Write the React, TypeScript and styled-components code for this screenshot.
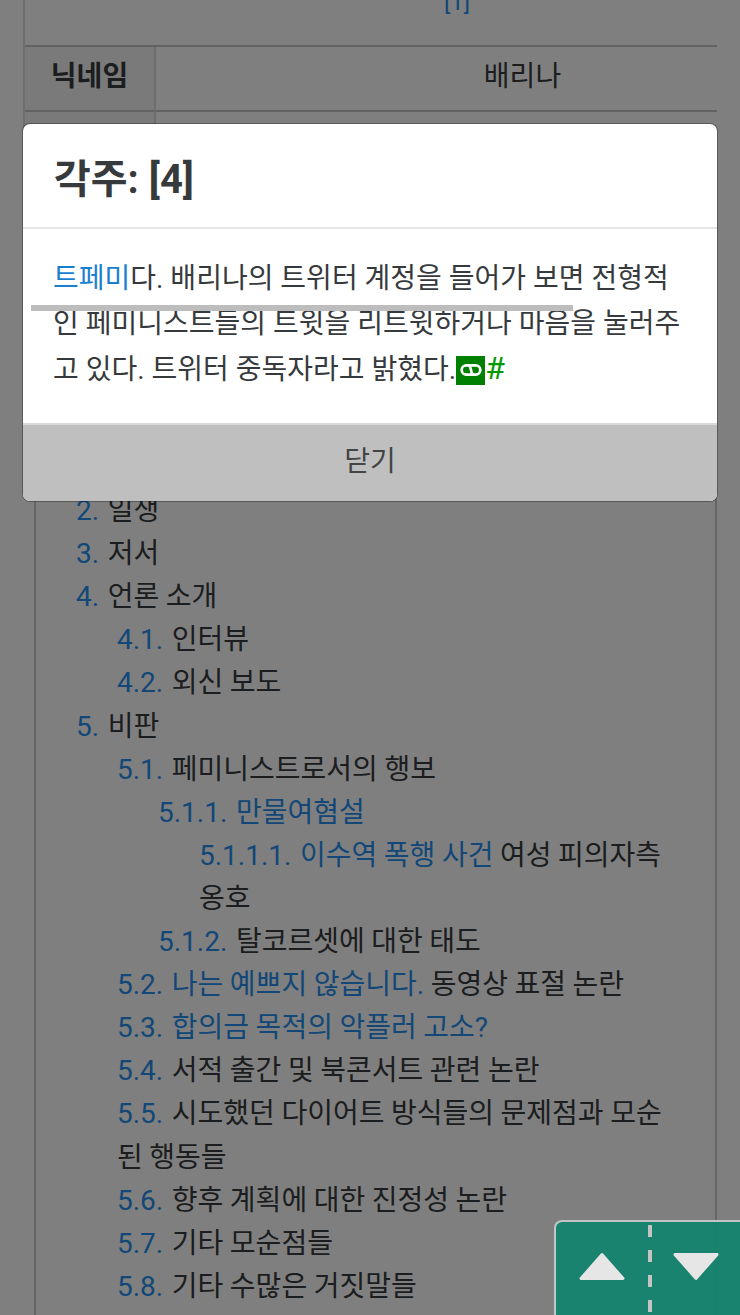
import styled, { createGlobalStyle } from 'styled-components';

interface TocEntry {
    level: number;
    num: string;
    linkText?: string;
    text?: string;
}

const tocEntries: TocEntry[] = [
    { level: 0, num: '1.', text: '개요' },
    { level: 0, num: '2.', text: '일생' },
    { level: 0, num: '3.', text: '저서' },
    { level: 0, num: '4.', text: '언론 소개' },
    { level: 1, num: '4.1.', text: '인터뷰' },
    { level: 1, num: '4.2.', text: '외신 보도' },
    { level: 0, num: '5.', text: '비판' },
    { level: 1, num: '5.1.', text: '페미니스트로서의 행보' },
    { level: 2, num: '5.1.1.', linkText: '만물여혐설' },
    { level: 3, num: '5.1.1.1.', linkText: '이수역 폭행 사건', text: ' 여성 피의자측 옹호' },
    { level: 2, num: '5.1.2.', text: '탈코르셋에 대한 태도' },
    { level: 1, num: '5.2.', linkText: '나는 예쁘지 않습니다.', text: ' 동영상 표절 논란' },
    { level: 1, num: '5.3.', linkText: '합의금 목적의 악플러 고소?' },
    { level: 1, num: '5.4.', text: '서적 출간 및 북콘서트 관련 논란' },
    { level: 1, num: '5.5.', text: '시도했던 다이어트 방식들의 문제점과 모순된 행동들' },
    { level: 1, num: '5.6.', text: '향후 계획에 대한 진정성 논란' },
    { level: 1, num: '5.7.', text: '기타 모순점들' },
    { level: 1, num: '5.8.', text: '기타 수많은 거짓말들' },
];

const GlobalStyle = createGlobalStyle`
    html, body {
        margin: 0;
        padding: 0;
        background: #ffffff;
    }

    * {
        box-sizing: border-box;
    }
`;

const Page = styled.div`
    position: relative;
    width: 740px;
    height: 1315px;
    overflow: hidden;
    background: #ffffff;
    color: #373a3c;
    font-family: Roboto, 'Noto Sans CJK KR', sans-serif;
    font-size: 28px;
`;

const Article = styled.div`
    display: flex;
    flex-direction: column;
    padding: 0 23px;
`;

const TableWrap = styled.div`
    width: 694px;
    height: 300px;
    overflow: hidden;
    border-left: 2px solid #dddddd;
`;

const Table = styled.div`
    display: grid;
    grid-template-columns: 131px 733px;
    width: 864px;
`;

const SourceCell = styled.div`
    grid-column: 1 / 3;
    height: 47px;
    border-bottom: 2px solid #c4c4c4;
    text-align: center;
    line-height: 4px;
    font-size: 24px;
`;

const HeadCell = styled.div<{ $height: number }>`
    display: flex;
    align-items: center;
    justify-content: center;
    height: ${props => props.$height}px;
    padding-bottom: 10px;
    background: #f5f5f5;
    border-right: 2px solid #dddddd;
    border-bottom: 2px solid #c4c4c4;
    font-weight: 700;
`;

const ValueCell = styled.div<{ $height: number }>`
    display: flex;
    align-items: center;
    justify-content: center;
    height: ${props => props.$height}px;
    padding-bottom: 10px;
    border-bottom: 2px solid #c4c4c4;
`;

const Toc = styled.div`
    margin: 120px 0 0 11px;
    width: 683px;
    height: 1000px;
    padding: 24px 36px 0 40px;
    border: 2px solid #cccccc;
`;

const TocItem = styled.div<{ $level: number }>`
    padding-left: ${props => props.$level * 41}px;
    line-height: 43.1px;
    word-break: break-all;
    word-spacing: -0.4px;
`;

const TocLink = styled.span`
    color: #268fee;
`;

const TocNumber = styled(TocLink)`
    margin-right: 2px;
`;

const Scrim = styled.div`
    position: absolute;
    inset: 0;
    background: rgba(0, 0, 0, 0.5);
`;

const Modal = styled.div`
    position: absolute;
    top: 124px;
    left: 23px;
    display: flex;
    flex-direction: column;
    width: 694px;
    height: 377px;
    overflow: hidden;
    background: #ffffff;
    border-radius: 7px;
    box-shadow: 0 0 0 1px rgba(0, 0, 0, 0.3);
`;

const ModalHeader = styled.div`
    display: flex;
    align-items: center;
    height: 105px;
    padding: 0 31px;
    border-bottom: 2px solid #e5e5e5;
`;

const ModalTitle = styled.h4`
    margin: 0;
    font-size: 40px;
    font-weight: 700;
    color: #373a3c;
`;

const ModalBody = styled.div`
    flex: 1;
    padding: 28px 30px 0;
    line-height: 44.5px;
    word-break: break-all;
`;

const BodyLink = styled.span`
    color: #1b7fd0;
`;

const SourceBadge = styled.span`
    display: inline-flex;
    align-items: center;
    justify-content: center;
    width: 29px;
    height: 29px;
    vertical-align: 2px;
    background: #008000;
`;

const SourceMark = styled.span`
    font-size: 32px;
    color: #009a00;
`;

const ModalFooter = styled.div`
    display: flex;
    align-items: center;
    justify-content: center;
    height: 78px;
    padding-bottom: 9px;
    background: #bfbfbf;
    border-top: 2px solid #d9d9d9;
    font-size: 28px;
    color: #444444;
`;

const ScrollBar = styled.div`
    position: absolute;
    top: 305px;
    left: 31px;
    width: 542px;
    height: 6px;
    background: #bdbdbd;
`;

const JumpNav = styled.div`
    position: absolute;
    right: 0;
    bottom: 0;
    display: flex;
    width: 186px;
    height: 95px;
    background: rgba(22, 131, 110, 0.97);
    border-top: 2px solid #c4c4c4;
    border-left: 2px solid #c4c4c4;
    border-top-left-radius: 8px;
`;

const JumpButton = styled.div<{ $width: number }>`
    display: flex;
    flex: 0 0 ${props => props.$width}px;
    justify-content: center;
    padding-top: 30px;
`;

const JumpDivider = styled.div`
    width: 4px;
    background-image: linear-gradient(#c4c4c4 50%, transparent 50%);
    background-size: 4px 25px;
    background-position: 0 3px;
`;

const LinkIcon = () => (
    <svg width="22" height="14" viewBox="0 0 26 16" fill="none" stroke="#ffffff" strokeWidth="3.2">
        <rect x="2" y="2.5" width="22" height="11" rx="5.5" />
        <path d="M10 2.5C14 2.5 12 13.5 16 13.5" />
    </svg>
);

const UpTriangle = () => (
    <svg width="46" height="29" viewBox="0 0 48 29">
        <path d="M24 2 L46 27 H2 Z" fill="#e6e6e6" stroke="#e6e6e6" strokeWidth="3" strokeLinejoin="round" />
    </svg>
);

const DownTriangle = () => (
    <svg width="46" height="29" viewBox="0 0 48 29">
        <path d="M2 2 H46 L24 27 Z" fill="#e6e6e6" stroke="#e6e6e6" strokeWidth="3" strokeLinejoin="round" />
    </svg>
);

const App = () => {
    return (
        <Page>
            <GlobalStyle />
            <Article>
                <TableWrap>
                    <Table>
                        <SourceCell>
                            <TocLink>[1]</TocLink>
                        </SourceCell>
                        <HeadCell $height={65}>닉네임</HeadCell>
                        <ValueCell $height={65}>배리나</ValueCell>
                        <HeadCell $height={188}>본명</HeadCell>
                        <ValueCell $height={188} />
                    </Table>
                </TableWrap>
                <Toc>
                    {tocEntries.map(entry => (
                        <TocItem key={entry.num} $level={entry.level}>
                            <TocNumber>{entry.num}</TocNumber>{' '}
                            {entry.linkText && <TocLink>{entry.linkText}</TocLink>}
                            {entry.text}
                        </TocItem>
                    ))}
                </Toc>
            </Article>
            <Scrim />
            <Modal>
                <ModalHeader>
                    <ModalTitle>각주: [4]</ModalTitle>
                </ModalHeader>
                <ModalBody>
                    <BodyLink>트페미</BodyLink>다. 배리나의 트위터 계정을 들어가 보면 전형적인 페미니스트들의 트윗을 리트윗하거나 마음을 눌러주고 있다. 트위터 중독자라고 밝혔다.
                    <SourceBadge>
                        <LinkIcon />
                    </SourceBadge>
                    <SourceMark>#</SourceMark>
                </ModalBody>
                <ModalFooter>닫기</ModalFooter>
            </Modal>
            <ScrollBar />
            <JumpNav>
                <JumpButton $width={92}>
                    <UpTriangle />
                </JumpButton>
                <JumpDivider />
                <JumpButton $width={88}>
                    <DownTriangle />
                </JumpButton>
            </JumpNav>
        </Page>
    );
};

export default App;
